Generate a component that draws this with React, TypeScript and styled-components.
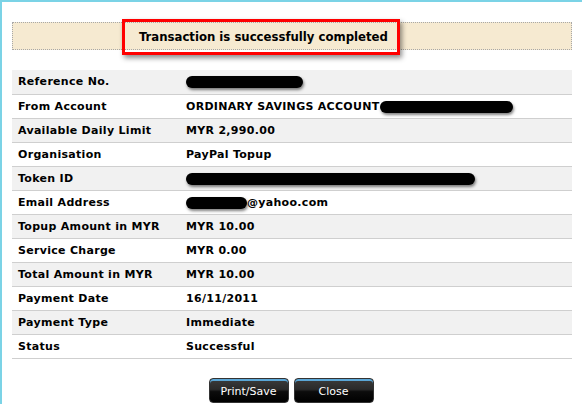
import React from 'react'
import styled, {createGlobalStyle} from 'styled-components'

const GlobalStyle = createGlobalStyle`
    html, body {
        margin: 0;
        padding: 0;
        background: #fff;
    }
    body {
        font-family: "DejaVu Sans", Verdana, sans-serif;
    }
`

const rows: {label: string, value?: string, blob?: number, prefixBlob?: number}[] = [
    {label: "Reference No.", blob: 117},
    {label: "From Account", value: "ORDINARY SAVINGS ACCOUNT", blob: 133},
    {label: "Available Daily Limit", value: "MYR 2,990.00"},
    {label: "Organisation", value: "PayPal Topup"},
    {label: "Token ID", blob: 289},
    {label: "Email Address", value: "@yahoo.com", prefixBlob: 61},
    {label: "Topup Amount in MYR", value: "MYR 10.00"},
    {label: "Service Charge", value: "MYR 0.00"},
    {label: "Total Amount in MYR", value: "MYR 10.00"},
    {label: "Payment Date", value: "16/11/2011"},
    {label: "Payment Type", value: "Immediate"},
    {label: "Status", value: "Successful"},
]

const App = () => {
  return (
      <>
          <GlobalStyle />
          <Frame>
              <Banner>
                  <Message>
                      Transaction is successfully completed
                      <Highlight />
                  </Message>
              </Banner>

              <Table>
                  <tbody>
                      {rows.map((r, i) => (
                          <Row key={r.label} odd={i % 2 === 0}>
                              <Label>{r.label}</Label>
                              <Value>
                                  {r.prefixBlob && <Blob w={r.prefixBlob} />}
                                  {r.value}
                                  {r.blob && <Blob w={r.blob} />}
                              </Value>
                          </Row>
                      ))}
                  </tbody>
              </Table>

              <Buttons>
                  <Btn>Print/Save</Btn>
                  <Btn>Close</Btn>
              </Buttons>
          </Frame>
      </>
  )
}

export default App

const Frame = styled.div`
    border-top: 2px solid #7bd3e6;
    border-left: 2px solid #7bd3e6;
    padding: 20px 10px 0 10px;
    height: 404px;
    box-sizing: border-box;
    width: 582px;
`
const Banner = styled.div`
    height: 28px;
    box-sizing: border-box;
    background: #f6ead1;
    border: 1px dotted #a8a8a8;
    display: flex;
    align-items: center;
    padding-left: 126px;
`
const Message = styled.span`
    position: relative;
    font-family: "DejaVu Sans Condensed", "DejaVu Sans", sans-serif;
    font-weight: bold;
    font-size: 13px;
    color: #000;
`
const Highlight = styled.span`
    position: absolute;
    left: -17px;
    right: -12px;
    top: -10px;
    bottom: -11px;
    border: 3px solid #f00;
    box-shadow: 2px 3px 5px rgba(0, 0, 0, 0.45);
`
const Table = styled.table`
    margin-top: 20px;
    width: 560px;
    border-collapse: collapse;
`
const Row = styled.tr<{odd: boolean}>`
    height: 24px;
    background: ${({odd}) => odd ? '#f1f1f1' : '#fff'};
    border-bottom: 1px solid #cfcfcf;
`
const Label = styled.td`
    width: 168px;
    padding: 0 0 0 6px;
    font-size: 11px;
    font-weight: bold;
    letter-spacing: 0.3px;
    color: #000;
    white-space: nowrap;
`
const Value = styled.td`
    padding: 0;
    font-size: 11px;
    font-weight: bold;
    letter-spacing: 0.3px;
    color: #000;
    white-space: nowrap;
`
const Blob = styled.span<{w: number}>`
    display: inline-block;
    vertical-align: middle;
    width: ${({w}) => w}px;
    height: 12px;
    background: #000;
    border-radius: 6px;
    box-shadow: 1px 2px 3px rgba(0, 0, 0, 0.5);
`
const Buttons = styled.div`
    display: flex;
    justify-content: center;
    gap: 5px;
    margin-top: 19px;
    padding-right: 2px;
`
const Btn = styled.button`
    width: 80px;
    height: 25px;
    border: 1px solid #333;
    border-radius: 4px;
    background: linear-gradient(#3b3b3b 0%, #2a2a2a 45%, #0c0c0c 55%, #000 100%);
    box-shadow: inset 0 2px 0 #5aa6d6;
    color: #fff;
    font-family: "DejaVu Sans", Verdana, sans-serif;
    font-size: 11px;
    padding: 2px 0 0;
`
